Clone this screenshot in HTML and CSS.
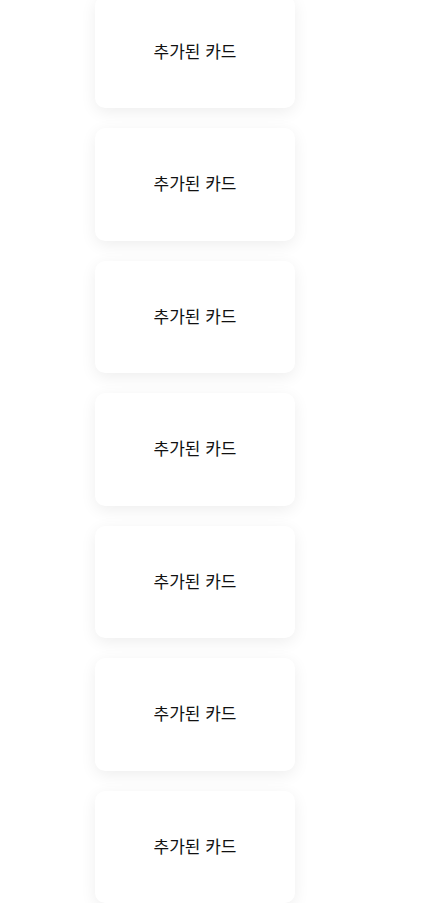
FILE: index.html
```html
<!DOCTYPE html>
<html lang="ko">
<head>
<meta charset="utf-8">
<link rel="stylesheet" href="styles.css">
</head>
<body>
<div class="list">
  <div class="card">추가된 카드</div>
  <div class="card">추가된 카드</div>
  <div class="card">추가된 카드</div>
  <div class="card">추가된 카드</div>
  <div class="card">추가된 카드</div>
  <div class="card">추가된 카드</div>
  <div class="card">추가된 카드</div>
</div>
</body>
</html>
```
FILE: styles.css
```css
html, body {
  margin: 0;
  padding: 0;
  background: #ffffff;
}
body {
  font-family: "Noto Sans CJK KR", "Noto Sans", sans-serif;
  color: #111111;
  overflow: hidden;
}
.list {
  display: flex;
  flex-direction: column;
  gap: 20px;
  padding-left: 95px;
  margin-top: -4.5px;
}
.card {
  width: 200px;
  height: 112.5px;
  box-sizing: border-box;
  padding-bottom: 3px;
  background: #ffffff;
  border-radius: 10px;
  box-shadow: 0 4px 16px rgba(0, 0, 0, 0.07);
  display: flex;
  align-items: center;
  justify-content: center;
  font-size: 17px;
  flex: none;
}
```
